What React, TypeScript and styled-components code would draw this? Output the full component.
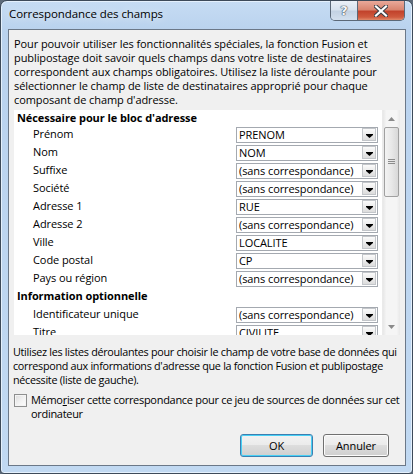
import React from "react";
import styled, { createGlobalStyle } from "styled-components";

const GlobalStyle = createGlobalStyle`
  html, body {
    margin: 0;
    padding: 0;
    background: #5e6b7a;
  }
  body {
    font-family: "Open Sans", "Noto Sans", "Liberation Sans", sans-serif;
    font-size: 11px;
    letter-spacing: -0.08px;
    color: #000;
  }
`;

const Window = styled.div`
  width: 413px;
  height: 474px;
  box-sizing: border-box;
  border: 1px solid #3d4a59;
  border-radius: 7px 7px 4px 4px;
  background: linear-gradient(180deg, #c6dcf3 0px, #b9d2ee 30px, #c1d9f2 100%);
  box-shadow: inset 0 0 0 1px #e4f0fc;
  display: flex;
  flex-direction: column;
`;

const TitleBar = styled.div`
  height: 28px;
  display: flex;
  align-items: flex-start;
  padding-left: 8px;
  padding-right: 7px;
`;

const Title = styled.div`
  font-size: 11.5px;
  line-height: 14px;
  margin-top: 6px;
  color: #000;
  text-shadow: 0 0 8px rgba(255, 255, 255, 0.9);
`;

const CaptionButtons = styled.div`
  margin-left: auto;
  display: flex;
  height: 19px;
  border: 1px solid #5b6878;
  border-top: none;
  border-radius: 0 0 5px 5px;
  overflow: hidden;
`;

const HelpButton = styled.div`
  width: 26px;
  display: flex;
  align-items: center;
  justify-content: center;
  background: linear-gradient(180deg, #eaf0f7 0%, #d8e3ef 45%, #c4d3e4 55%, #d3e0ee 100%);
  border-right: 1px solid #5b6878;
  font-family: "DejaVu Sans", sans-serif;
  font-weight: bold;
  font-size: 13px;
  color: #f4f6f9;
  text-shadow: 0 0 1px #3b4654, 0 0 1px #3b4654, 0 0 1px #3b4654;
`;

const CloseButton = styled.div`
  width: 46px;
  display: flex;
  align-items: center;
  justify-content: center;
  background: linear-gradient(180deg, #e9a99a 0%, #d98570 45%, #c2432c 55%, #cf5a3e 85%, #e08a6b 100%);
`;

const Client = styled.div`
  flex: 1;
  margin: 0 6px 7px 7px;
  border: 1px solid #6b7888;
  background: #f0f0f0;
  display: flex;
  flex-direction: column;
`;

const Paragraph = styled.p<{ $top: number; $left: number; $tight?: boolean }>`
  margin: ${(p) => p.$top}px 1px 0 ${(p) => p.$left}px;
  line-height: 14px;
  font-size: ${(p) => (p.$tight ? "10.8px" : "11px")};
  letter-spacing: ${(p) => (p.$tight ? "-0.3px" : "-0.08px")};
`;

const ListBox = styled.div`
  margin: 3px 5px 0 5px;
  height: 225px;
  background: #fff;
  display: flex;
  overflow: hidden;
`;

const ListBody = styled.div`
  flex: 1;
  padding-left: 3px;
`;

const SectionHeader = styled.div<{ $first?: boolean }>`
  font-weight: bold;
  height: ${(p) => (p.$first ? 15 : 18)}px;
  line-height: ${(p) => (p.$first ? 15 : 18)}px;
`;

const FieldRow = styled.div`
  height: 18px;
  display: grid;
  grid-template-columns: 203px 142px;
  align-items: center;
  padding-left: 16px;
`;

const FieldLabel = styled.span`
  line-height: 18px;
`;

const Combo = styled.div`
  height: 16px;
  box-sizing: border-box;
  border: 1px solid #a4a9b0;
  display: flex;
  align-items: center;
  background: #fff;
  margin-top: 1px;
`;

const ComboText = styled.span`
  flex: 1;
  padding-left: 2px;
  line-height: 14px;
  white-space: nowrap;
  overflow: hidden;
`;

const ComboArrow = styled.span`
  width: 14px;
  height: 13px;
  margin: 0 1px 0 4px;
  box-sizing: border-box;
  border: 1px solid #c3c6ca;
  background: linear-gradient(180deg, #fbfbfb 0%, #ececec 50%, #dcdcdc 100%);
  display: flex;
  align-items: flex-end;
  justify-content: center;
  padding-bottom: 2px;
`;

const ScrollBar = styled.div`
  width: 17px;
  display: flex;
  flex-direction: column;
  background: linear-gradient(90deg, #e7e7e7 0%, #f5f5f5 20%, #f5f5f5 80%, #e9e9e9 100%);
  border-left: 1px solid #eaeaea;
`;

const ScrollArrow = styled.div`
  height: 17px;
  display: flex;
  align-items: center;
  justify-content: center;
`;

const Thumb = styled.div`
  height: 70px;
  margin: 0 1px;
  box-sizing: border-box;
  border: 1px solid #a0a0a0;
  border-radius: 2px;
  background: linear-gradient(90deg, #f3f3f3 0%, #e8e8e8 50%, #d8d8d8 100%);
  display: flex;
  align-items: center;
  justify-content: center;
`;

const TrackSpace = styled.div`
  flex: 1;
`;

const CheckRow = styled.label`
  display: flex;
  align-items: flex-start;
  margin: 6px 1px 0 5px;
  line-height: 14px;
  letter-spacing: -0.3px;
`;

const CheckBox = styled.span`
  width: 13px;
  height: 13px;
  flex: none;
  box-sizing: border-box;
  border: 1px solid #8e8f8f;
  background: linear-gradient(135deg, #dcdcdc 0%, #f4f4f4 60%, #fdfdfd 100%);
  box-shadow: inset 0 0 0 1px #f4f4f4;
  margin-top: 1px;
  margin-right: 4px;
`;

const ButtonRow = styled.div`
  margin-top: auto;
  margin-bottom: 8px;
  padding-right: 16px;
  display: flex;
  justify-content: flex-end;
  gap: 10px;
`;

const Button = styled.div<{ $width: number; $default?: boolean }>`
  width: ${(p) => p.$width}px;
  height: 23px;
  box-sizing: border-box;
  border: 1px solid ${(p) => (p.$default ? "#3c7fb1" : "#707070")};
  border-radius: 3px;
  background: linear-gradient(180deg, #f2f2f2 0%, #ebebeb 49%, #dddddd 50%, #cfcfcf 100%);
  box-shadow: inset 0 0 0 1px ${(p) => (p.$default ? "#48d0f5" : "#fcfcfc")};
  display: flex;
  align-items: center;
  justify-content: center;
`;

type Field = { label: string; value: string };

const required: Field[] = [
  { label: "Prénom", value: "PRENOM" },
  { label: "Nom", value: "NOM" },
  { label: "Suffixe", value: "(sans correspondance)" },
  { label: "Société", value: "(sans correspondance)" },
  { label: "Adresse 1", value: "RUE" },
  { label: "Adresse 2", value: "(sans correspondance)" },
  { label: "Ville", value: "LOCALITE" },
  { label: "Code postal", value: "CP" },
  { label: "Pays ou région", value: "(sans correspondance)" },
];

const optional: Field[] = [
  { label: "Identificateur unique", value: "(sans correspondance)" },
  { label: "Titre", value: "CIVILITE" },
];

const DownGlyph = () => (
  <svg width="7" height="4" viewBox="0 0 7 4">
    <path d="M0 0h7v1L3.5 4 0 1z" fill="#000" />
  </svg>
);

const Row: React.FC<{ field: Field }> = ({ field }) => (
  <FieldRow>
    <FieldLabel>{field.label}</FieldLabel>
    <Combo>
      <ComboText>{field.value}</ComboText>
      <ComboArrow>
        <DownGlyph />
      </ComboArrow>
    </Combo>
  </FieldRow>
);

export default function App() {
  return (
    <>
      <GlobalStyle />
      <Window>
        <TitleBar>
          <Title>Correspondance des champs</Title>
          <CaptionButtons>
            <HelpButton>?</HelpButton>
            <CloseButton>
              <svg width="14" height="12" viewBox="0 0 14 12">
                <path
                  d="M2 1.5l10 9M12 1.5l-10 9"
                  stroke="#3a3f46"
                  strokeWidth="4.2"
                  strokeLinecap="square"
                />
                <path
                  d="M2 1.5l10 9M12 1.5l-10 9"
                  stroke="#fff"
                  strokeWidth="2.2"
                  strokeLinecap="square"
                />
              </svg>
            </CloseButton>
          </CaptionButtons>
        </TitleBar>
        <Client>
          <Paragraph $top={7} $left={5}>
            Pour pouvoir utiliser les fonctionnalités spéciales, la fonction Fusion et
            publipostage doit savoir quels champs dans votre liste de destinataires
            correspondent aux champs obligatoires. Utilisez la liste déroulante pour
            sélectionner le champ de liste de destinataires approprié pour chaque
            composant de champ d'adresse.
          </Paragraph>
          <ListBox>
            <ListBody>
              <SectionHeader $first>Nécessaire pour le bloc d'adresse</SectionHeader>
              {required.map((f) => (
                <Row key={f.label} field={f} />
              ))}
              <SectionHeader>Information optionnelle</SectionHeader>
              {optional.map((f) => (
                <Row key={f.label} field={f} />
              ))}
            </ListBody>
            <ScrollBar>
              <ScrollArrow>
                <svg width="7" height="4" viewBox="0 0 7 4">
                  <path d="M0 4L3.5 0 7 4z" fill="#8a8a8a" />
                </svg>
              </ScrollArrow>
              <Thumb>
                <svg width="7" height="6" viewBox="0 0 7 6">
                  <path d="M0 .5h7M0 2.5h7M0 4.5h7" stroke="#8c8c8c" strokeWidth="1" />
                </svg>
              </Thumb>
              <TrackSpace />
              <ScrollArrow>
                <svg width="7" height="4" viewBox="0 0 7 4">
                  <path d="M0 0L3.5 4 7 0z" fill="#8a8a8a" />
                </svg>
              </ScrollArrow>
            </ScrollBar>
          </ListBox>
          <Paragraph $top={10} $left={4} $tight>
            Utilisez les listes déroulantes pour choisir le champ de votre base de données qui
            correspond aux informations d'adresse que la fonction Fusion et publipostage
            nécessite (liste de gauche).
          </Paragraph>
          <CheckRow>
            <CheckBox />
            <span>
              Mémo<u>r</u>iser cette correspondance pour ce jeu de sources de données sur cet
              ordinateur
            </span>
          </CheckRow>
          <ButtonRow>
            <Button $width={73} $default>
              OK
            </Button>
            <Button $width={66}>Annuler</Button>
          </ButtonRow>
        </Client>
      </Window>
    </>
  );
}
